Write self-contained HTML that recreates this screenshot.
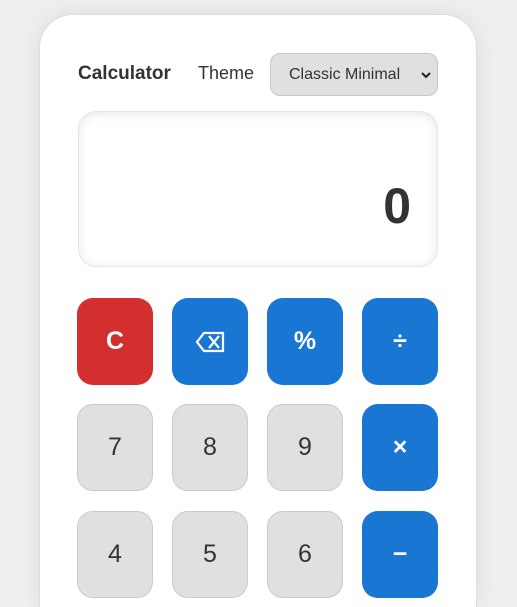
<!DOCTYPE html>
<html style="height:607px;overflow:hidden"><head><style>
body{margin:0;width:517px;height:607px;overflow:hidden;background:#efefef;font-family:"Liberation Sans",sans-serif;position:relative;}
.card{position:absolute;left:39px;top:14px;width:436px;height:593px;background:#fff;border:1px solid #ddd;border-bottom:none;border-radius:34px 34px 0 0;box-shadow:0 0 24px rgba(0,0,0,.08);box-sizing:border-box;width:438px;}
.t{position:absolute;top:63px;font-size:19px;color:#333;}
.sel{position:absolute;left:270px;top:53px;width:168px;height:43px;background:#e0e0e0;border:1px solid #c8c8c8;border-radius:10px;font-size:16px;color:#333;box-sizing:border-box;}
.sel span{position:absolute;left:18px;top:12px}
.sel svg{position:absolute;right:6px;top:17px}
.disp{position:absolute;left:78px;top:111px;width:360px;height:156px;border:1px solid #e6e6e6;border-radius:18px;box-sizing:border-box;box-shadow:inset 0 2px 10px rgba(0,0,0,.1);background:#fff;}
.disp span{position:absolute;right:26px;top:64px;font-size:50px;color:#333;line-height:60px;font-weight:bold}
.b{position:absolute;width:76px;height:87px;border-radius:16px;box-sizing:border-box;display:flex;align-items:center;justify-content:center;font-size:25px;}
.n{background:#e0e0e0;border:1px solid #cbcbcb;color:#333;}
.o{background:#1976d2;color:#fff;font-weight:bold;}
.r{background:#d32f2f;color:#fff;font-weight:bold;}
</style></head><body>
<div class="card"></div>
<div class="t" style="left:78px;font-weight:bold">Calculator</div>
<div class="t" style="left:198px;font-size:18px">Theme</div>
<div class="sel"><span>Classic Minimal</span><svg width="10" height="8" viewBox="0 0 10 8"><path d="M1 2l4 4 4-4" stroke="#222" stroke-width="2" fill="none"/></svg></div>
<div class="disp"><span>0</span></div>
<div class="b r" style="left:77px;top:298px">C</div>
<div class="b o" style="left:172px;top:298px"><svg width="30" height="22" viewBox="0 0 30 22"><path d="M9 2H28V20H9L2 11Z M14 5L24 17 M24 5L14 17" stroke="#fff" stroke-width="2.2" fill="none"/></svg></div>
<div class="b o" style="left:267px;top:298px">%</div>
<div class="b o" style="left:362px;top:298px">÷</div>
<div class="b n" style="left:77px;top:404px">7</div>
<div class="b n" style="left:172px;top:404px">8</div>
<div class="b n" style="left:267px;top:404px">9</div>
<div class="b o" style="left:362px;top:404px">×</div>
<div class="b n" style="left:77px;top:511px">4</div>
<div class="b n" style="left:172px;top:511px">5</div>
<div class="b n" style="left:267px;top:511px">6</div>
<div class="b o" style="left:362px;top:511px">−</div>
</body></html>
